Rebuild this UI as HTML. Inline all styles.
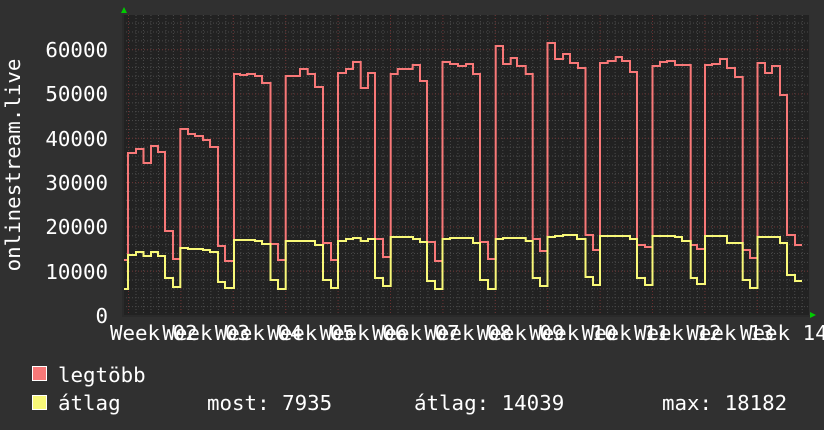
<!DOCTYPE html>
<html><head><meta charset="utf-8"><style>
html,body{margin:0;padding:0;background:#303030;}
svg{display:block}
text{font-family:"DejaVu Sans Mono","Liberation Mono",monospace;fill:#fff;}
</style></head><body>
<svg width="824" height="430" viewBox="0 0 824 430" xmlns="http://www.w3.org/2000/svg">
<defs>
<pattern id="mv" patternUnits="userSpaceOnUse" x="128" y="0" width="7.486" height="430">
<line x1="0.5" y1="0" x2="0.5" y2="430" stroke="#4a4a4a" stroke-width="1" stroke-dasharray="1,2"/></pattern>
<pattern id="mh" patternUnits="userSpaceOnUse" x="0" y="315" width="824" height="8.86">
<line x1="0" y1="0.5" x2="824" y2="0.5" stroke="#4a4a4a" stroke-width="1" stroke-dasharray="1,2"/></pattern>
<pattern id="Mv" patternUnits="userSpaceOnUse" x="128" y="0" width="52.4" height="430">
<line x1="0.5" y1="0" x2="0.5" y2="430" stroke="#6a3030" stroke-width="1" stroke-dasharray="1,2"/></pattern>
<pattern id="Mh" patternUnits="userSpaceOnUse" x="0" y="315" width="824" height="44.3">
<line x1="0" y1="0.5" x2="824" y2="0.5" stroke="#6a3030" stroke-width="1" stroke-dasharray="1,2"/></pattern>
</defs>
<rect x="124" y="15" width="685" height="300" fill="#222"/>
<rect x="124" y="15" width="685" height="300" fill="url(#mv)"/>
<rect x="124" y="15" width="685" height="300" fill="url(#mh)"/>
<rect x="124" y="15" width="685" height="300" fill="url(#Mv)"/>
<rect x="124" y="15" width="685" height="300" fill="url(#Mh)"/>
<rect x="122" y="15" width="2" height="302" fill="#2a2a2a"/>
<rect x="122" y="315" width="688" height="2" fill="#2a2a2a"/>
<polygon points="124,7 121,13 127,13" fill="#00cc00"/>
<polygon points="816,315 810,312 810,318" fill="#00cc00"/>

<path fill="none" stroke="#f87878" stroke-width="2" d="M124 260 H128 V153 H136 V149 H143.5 V163 H151 V146 H158 V152 H165 V231 H173 V259 H180.3
V129 H188 V134 H195 V136 H203 V140 H210 V147 H218 V246 H225 V261 H234
V74 H240 V75 H247 V74 H255 V76 H262 V83 H270.5 V244 H278 V260 H285.7
V76 H300 V69 H307.7 V74 H315 V87 H323 V243 H331 V260 H338
V73 H346 V69 H353 V62 H360.7 V88 H368 V73 H375 V239 H383 V257 H390.7
V74 H397.7 V69 H412.7 V65 H420 V81 H427 V242 H435 V261 H442.5
V62 H450 V64 H458 V66 H466 V64 H473 V74 H480 V242 H488 V259 H495.7
V46 H503 V64 H510.7 V58 H517 V66 H525.7 V74 H532.7 V239 H540 V251 H547.5
V43 H555 V59 H563 V54 H570 V63 H578 V68 H585.5 V235 H593 V250 H600
V63 H607.7 V61 H615.7 V57 H622 V61 H630 V72 H637 V245 H645 V247 H652.5
V66 H660 V62 H667 V61 H675 V65 H690.7 V245 H697 V249 H705
V65 H712 V64 H720 V59 H727 V68 H735 V77 H742.7 V250 H750 V258 H757.5
V63 H765 V73 H772 V66 H780 V95 H787 V235 H795 V245 H802"/>

<path fill="none" stroke="#f8f878" stroke-width="2" d="M124 289 H128 V255 H136 V252 H143.5 V256 H151 V252 H158 V256 H165 V278 H173 V287 H180.3
V248 H188 V249 H203 V250 H210 V252 H218 V282 H225 V288 H234
V240 H255 V241 H262 V244 H270.5 V280 H278 V289 H285.7
V241 H315 V245 H323 V280 H331 V288 H338
V241 H346 V239 H353 V238 H360.7 V241 H368 V239 H375 V278 H383 V286 H390.7
V237 H413 V239 H420 V242 H427 V281 H435 V289 H442.5
V239 H450 V238 H473 V243 H480 V280 H488 V289 H495.7
V239 H503 V238 H525.7 V241 H532.7 V278 H540 V286 H547.5
V237 H555 V236 H563 V235 H577 V239 H585.5 V277 H593 V285 H600
V236 H630 V239 H637 V278 H645 V285 H652.5
V236 H675 V237 H682 V241 H690.7 V278 H697 V284 H705
V236 H727 V243 H742.7 V280 H750 V288 H757.5
V237 H780 V243 H787 V275 H795 V281 H802"/>

<g font-size="20.8" text-anchor="end">
<text x="108" y="57">60000</text>
<text x="108" y="101">50000</text>
<text x="108" y="146">40000</text>
<text x="108" y="190">30000</text>
<text x="108" y="234">20000</text>
<text x="108" y="279">10000</text>
<text x="108" y="323">0</text>
</g>
<text font-size="20.8" transform="translate(20,165) rotate(-90)" text-anchor="middle">onlinestream.live</text>

<g font-size="20.8">
<text x="110" y="340">Week 02</text>
<text x="162.4" y="340">Week 03</text>
<text x="214.8" y="340">Week 04</text>
<text x="267.2" y="340">Week 05</text>
<text x="319.6" y="340">Week 06</text>
<text x="372" y="340">Week 07</text>
<text x="424.4" y="340">Week 08</text>
<text x="476.8" y="340">Week 09</text>
<text x="529.2" y="340">Week 10</text>
<text x="581.6" y="340">Week 11</text>
<text x="634" y="340">Week 12</text>
<text x="686.4" y="340">Week 13</text>
<text x="740" y="340">Week 14</text>
</g>

<rect x="32.5" y="366.5" width="14" height="14" fill="#f87878" stroke="#fff" stroke-width="1"/>
<rect x="32.5" y="395.5" width="14" height="14" fill="#f8f878" stroke="#fff" stroke-width="1"/>
<g font-size="20.8">
<text x="58" y="382">legtöbb</text>
<text x="58" y="410">átlag</text>
<text x="207" y="410">most: 7935</text>
<text x="414" y="410">átlag: 14039</text>
<text x="662" y="410">max: 18182</text>
</g>
</svg>
</body></html>
